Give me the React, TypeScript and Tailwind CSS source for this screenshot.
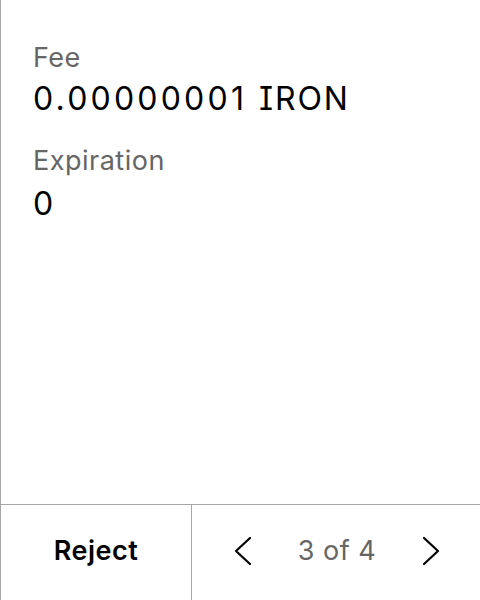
import React from "react";

export default function App() {
  return (
    <div
      className="w-[480px] h-[600px] bg-white flex flex-col border-l border-[#a6a6a6]"
      style={{ fontFamily: "Inter, 'Noto Sans', sans-serif" }}
    >
      <div className="flex-1 flex flex-col pl-[32px] pt-[42px]">
        <div className="text-[27px] leading-[32px] tracking-[0.5px] text-[#666666]">Fee</div>
        <div className="mt-[5px] flex text-[32px] leading-[40px] text-black [font-feature-settings:'cv08']">
          <span className="tracking-[3.2px]">0.00000001</span>
          <span className="ml-[12px] tracking-[1.8px]">IRON</span>
        </div>
        <div className="mt-[26px] text-[27px] leading-[32px] tracking-[0.5px] text-[#666666]">Expiration</div>
        <div className="mt-[7px] text-[32px] leading-[40px] text-black tracking-[2px]">0</div>
      </div>
      <div className="h-[96px] flex border-t border-[#a6a6a6]">
        <button className="w-[191px] flex items-center justify-center pb-[3px] border-r border-[#a6a6a6] text-[27px] tracking-[0.5px] font-semibold text-black">
          Reject
        </button>
        <div className="flex-1 flex items-center justify-between pb-[3px] pl-[41px] pr-[39px]">
          <svg width="20" height="30" viewBox="0 0 20 30" fill="none">
            <path d="M17 2 L3 15 L17 28" stroke="#000" strokeWidth="2.2" strokeLinecap="round" strokeLinejoin="round" />
          </svg>
          <span className="text-[27px] tracking-[0.5px] text-[#666666]">3 of 4</span>
          <svg width="20" height="30" viewBox="0 0 20 30" fill="none">
            <path d="M3 2 L17 15 L3 28" stroke="#000" strokeWidth="2.2" strokeLinecap="round" strokeLinejoin="round" />
          </svg>
        </div>
      </div>
    </div>
  );
}
